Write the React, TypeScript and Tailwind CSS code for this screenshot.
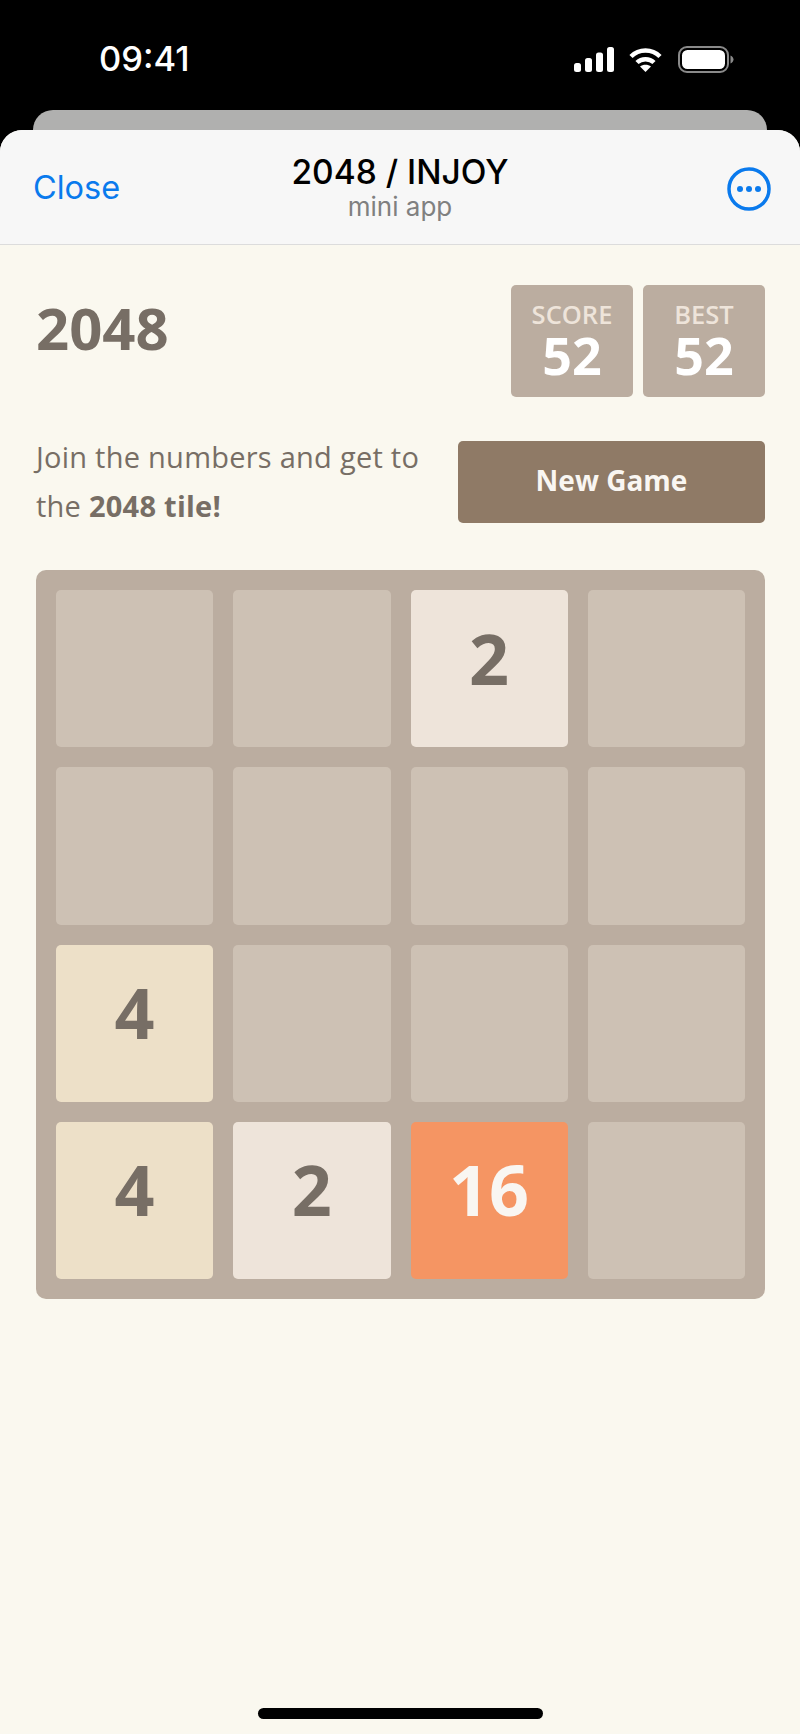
type TileValue = 0 | 2 | 4 | 16;

const board: TileValue[] = [0, 0, 2, 0, 0, 0, 0, 0, 4, 0, 0, 0, 4, 2, 16, 0];

const tileStyles: Record<TileValue, string> = {
  0: "bg-[#cdc1b4]",
  2: "bg-[#eee4da] text-[#776e65]",
  4: "bg-[#ede0c8] text-[#776e65]",
  16: "bg-[#f59563] text-[#f9f6f2]",
};

function StatusIcons() {
  return (
    <div className="flex items-center">
      <svg width="40" height="25" viewBox="0 0 40 25" fill="white">
        <rect x="0" y="16" width="7" height="9" rx="2.5" />
        <rect x="11" y="11" width="7" height="14" rx="2.5" />
        <rect x="22" y="5.5" width="7" height="19.5" rx="2.5" />
        <rect x="33" y="0" width="7" height="25" rx="2.5" />
      </svg>
      <svg className="ml-[15px]" width="33" height="25" viewBox="0 0 33 25" fill="none" stroke="white" strokeWidth="4.5">
        <path d="M2 9.5C10 1.5 23 1.5 31 9.5" />
        <path d="M8 15.5C12.6 11 20.4 11 25 15.5" />
        <path d="M16.5 25L11 19.5C14 17 19 17 22 19.5Z" fill="white" stroke="none" />
      </svg>
      <svg className="ml-[16px]" width="56" height="27" viewBox="0 0 56 27" fill="none">
        <rect x="1" y="1" width="49" height="25" rx="8" stroke="#8a8a8a" strokeWidth="2" />
        <rect x="4" y="4" width="43" height="19" rx="5.5" fill="white" />
        <path d="M52.5 9.5C54.5 10.5 55.5 12 55.5 13.5C55.5 15 54.5 16.5 52.5 17.5Z" fill="#8a8a8a" />
      </svg>
    </div>
  );
}

function ScoreBox({ label, value }: { label: string; value: number }) {
  return (
    <div className="flex h-[112px] w-[122px] flex-col items-center rounded-[5px] bg-[#bbada0] pt-[14px]">
      <span className="text-[25.5px] leading-[30px] font-semibold text-[#eee4da]">{label}</span>
      <span className="text-[52px] leading-[52px] font-bold text-white">{value}</span>
    </div>
  );
}

export default function App() {
  return (
    <div className="flex h-[1734px] w-[800px] flex-col overflow-hidden bg-black font-['Open_Sans',sans-serif]">
      <div className="flex h-[110px] shrink-0 items-start justify-between pl-[99px] pr-[66px] pt-[40px]">
        <span className="font-['Inter',sans-serif] text-[34.5px] leading-[38px] font-medium text-white">09:41</span>
        <div className="pt-[6px]">
          <StatusIcons />
        </div>
      </div>

      <div className="mx-[33px] h-[20px] shrink-0 rounded-t-[20px] bg-[#b0b0af]" />

      <div className="flex flex-1 flex-col overflow-hidden rounded-t-[22px] bg-[#faf8ef]">
        <header className="relative flex h-[115px] shrink-0 items-center justify-between border-b border-[#dcdcdc] bg-[#f7f7f7] pl-[33px] pr-[29px] font-['Inter',sans-serif]">
          <span className="pt-[2px] text-[32.5px] text-[#0a7aed]">Close</span>
          <div className="absolute inset-x-0 top-[22px] flex flex-col items-center">
            <span className="text-[33.5px] leading-[40px] font-medium text-black">2048 / INJOY</span>
            <span className="text-[26px] leading-[30px] text-[#808080]">mini app</span>
          </div>
          <svg width="44" height="44" viewBox="0 0 44 44" fill="none" className="mt-[4px]">
            <circle cx="22" cy="22" r="20" stroke="#0a7aed" strokeWidth="3.5" />
            <circle cx="13" cy="22" r="3" fill="#0a7aed" />
            <circle cx="22" cy="22" r="3" fill="#0a7aed" />
            <circle cx="31" cy="22" r="3" fill="#0a7aed" />
          </svg>
        </header>

        <main className="flex flex-1 flex-col pl-[36px] pr-[35px] pt-[40px] text-[#776e65]">
          <div className="flex items-start justify-between">
            <h1 className="pt-[7px] text-[58px] leading-[72px] font-bold">2048</h1>
            <div className="flex gap-[10px]">
              <ScoreBox label="SCORE" value={52} />
              <ScoreBox label="BEST" value={52} />
            </div>
          </div>

          <div className="mt-[35px] flex items-start justify-between">
            <p className="text-[29px] leading-[49px] tracking-[0.25px]">
              Join the numbers and get to
              <br />
              the <strong className="font-bold">2048 tile!</strong>
            </p>
            <button className="mt-[9px] h-[82px] w-[307px] rounded-[5px] bg-[#8f7a66] pb-[4px] text-[28px] font-bold text-[#f9f6f2]">
              New Game
            </button>
          </div>

          <div className="mt-[40px] grid h-[729px] w-[729px] grid-cols-4 grid-rows-4 gap-[20px] rounded-[10px] bg-[#bbada0] p-[20px]">
            {board.map((value, index) => (
              <div
                key={index}
                className={`flex items-center justify-center rounded-[5px] pb-[22px] text-[70px] leading-none font-bold ${tileStyles[value]}`}
              >
                {value !== 0 && value}
              </div>
            ))}
          </div>

          <div className="mt-auto mb-[15px] h-[11px] w-[285px] self-center rounded-full bg-black" />
        </main>
      </div>
    </div>
  );
}
